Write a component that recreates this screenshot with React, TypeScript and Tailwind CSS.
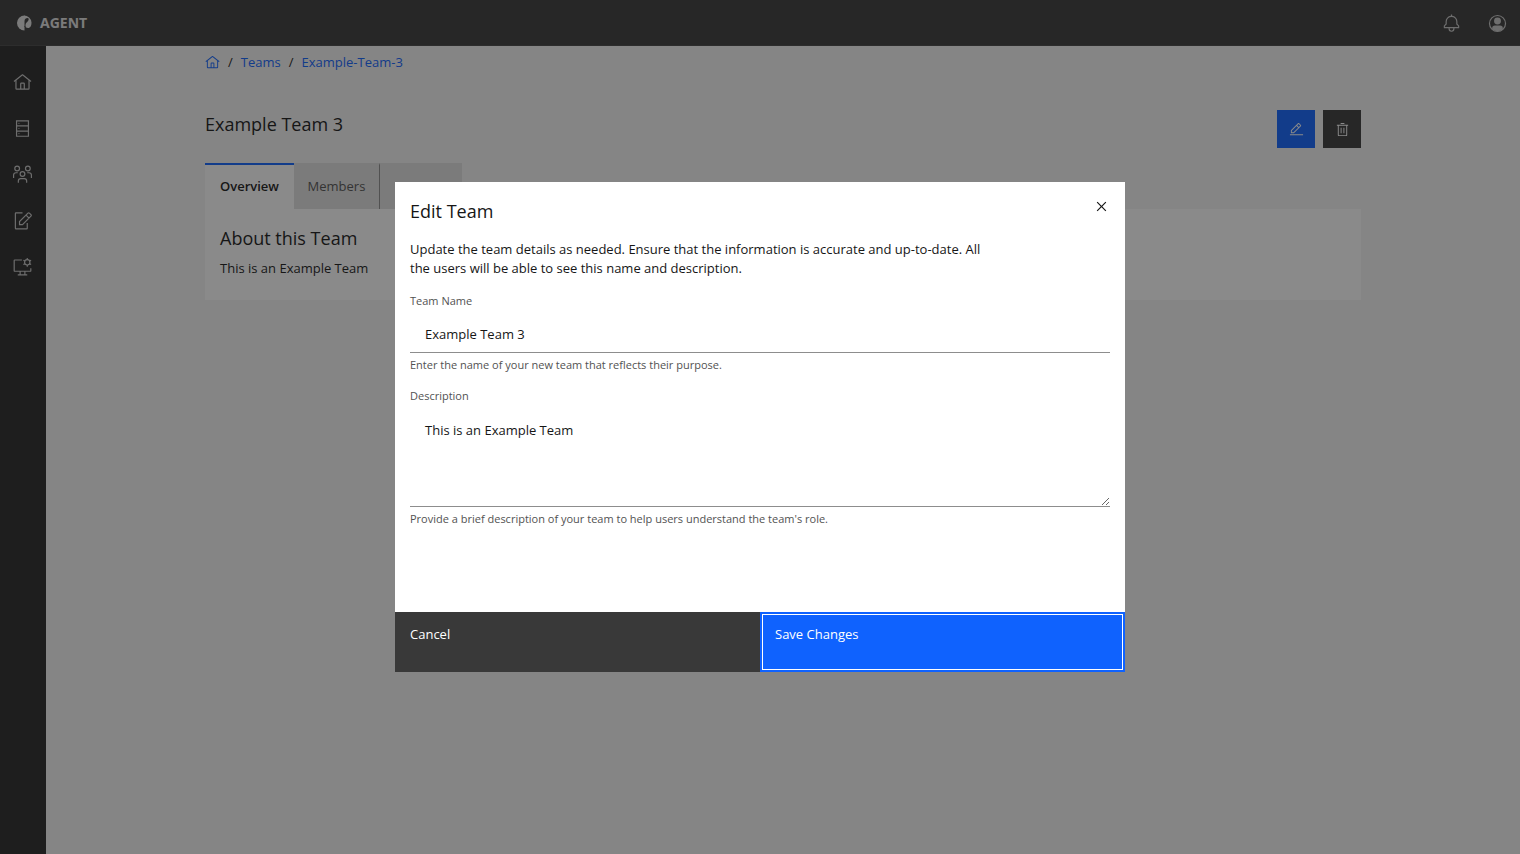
import React from "react";

type IconProps = { className?: string; children: React.ReactNode };

function Glyph({ className, children }: IconProps) {
  return (
    <svg viewBox="0 0 32 32" fill="currentColor" aria-hidden="true" className={className}>
      {children}
    </svg>
  );
}

function Outline({ className, children }: IconProps) {
  return (
    <svg viewBox="0 0 32 32" fill="none" stroke="currentColor" strokeWidth={2} aria-hidden="true" className={className}>
      {children}
    </svg>
  );
}

const HomeIcon = ({ className }: { className?: string }) => (
  <Glyph className={className}>
    <path d="M16.6123,2.2138a1.01,1.01,0,0,0-1.2427,0L1,13.4194l1.2427,1.5717L4,13.6208V26a2.0041,2.0041,0,0,0,2,2H26a2.0037,2.0037,0,0,0,2-2V13.63L29.7573,15,31,13.4282ZM18,26H14V18h4Zm2,0V18a2.0023,2.0023,0,0,0-2-2H14a2.002,2.002,0,0,0-2,2v8H6V12.0615l10-7.79,10,8.0122V26Z" />
  </Glyph>
);

const ServerIcon = () => (
  <Outline className="size-[19px]">
    <path d="M6 3H26V29H6ZM6 11.7H26M6 20.3H26" />
    <circle cx="10" cy="7.3" r="1" fill="currentColor" stroke="none" />
    <circle cx="10" cy="16" r="1" fill="currentColor" stroke="none" />
    <circle cx="10" cy="24.6" r="1" fill="currentColor" stroke="none" />
  </Outline>
);

const TeamIcon = () => (
  <Outline className="size-[19px]">
    <circle cx="7" cy="6" r="4" />
    <circle cx="25" cy="6" r="4" />
    <circle cx="16" cy="15" r="4" />
    <path d="M9 30V27a4 4 0 0 1 4-4h6a4 4 0 0 1 4 4v3M1 22V17a4 4 0 0 1 4-4H8M31 22V17a4 4 0 0 0-4-4H24" />
  </Outline>
);

const ComposeIcon = () => (
  <Outline className="size-[19px]">
    <path d="M16 3H5a1 1 0 0 0-1 1V29a1 1 0 0 0 1 1H23a1 1 0 0 0 1-1V20" />
    <path d="M11 23V17.8L25.2 3.6a1.7 1.7 0 0 1 2.4 0l2.6 2.6a1.7 1.7 0 0 1 0 2.4L16 23ZM22 7l5 5" />
  </Outline>
);

const ScreenSettingsIcon = () => (
  <Outline className="size-[19px]">
    <path d="M15 5H3a1 1 0 0 0-1 1V23a1 1 0 0 0 1 1H29a1 1 0 0 0 1-1V19M12 24V30M20 24V30M8 30H24" />
    <circle cx="24" cy="9" r="4.5" />
    <path d="M24 1.5V4.5M24 13.5V16.5M17.5 5.3L20.1 6.8M27.9 11.2L30.5 12.7M17.5 12.7L20.1 11.2M27.9 6.8L30.5 5.3" />
  </Outline>
);

const BellIcon = () => (
  <Glyph className="size-[19px]">
    <path d="M28.7071,19.293,26,16.5859V13a10.0136,10.0136,0,0,0-9-9.9492V1H15V3.0508A10.0136,10.0136,0,0,0,6,13v3.5859L3.2929,19.293A1,1,0,0,0,3,20v3a1,1,0,0,0,1,1h7v.7768a5.152,5.152,0,0,0,4.5,5.1987A5.0057,5.0057,0,0,0,21,25V24h7a1,1,0,0,0,1-1V20A1,1,0,0,0,28.7071,19.293ZM19,25a3,3,0,0,1-6,0V24h6Zm8-3H5V20.4141L7.707,17.707A1,1,0,0,0,8,17V13a8,8,0,0,1,16,0v4a1,1,0,0,0,.293.707L27,20.4141Z" />
  </Glyph>
);

const AvatarIcon = () => (
  <Outline className="size-[19px]">
    <circle cx="16" cy="16" r="13.5" />
    <circle cx="16" cy="11.8" r="5.8" fill="currentColor" stroke="none" />
    <path d="M7 25.5v-1.2a4.8 4.8 0 0 1 4.8-4.8h8.4a4.8 4.8 0 0 1 4.8 4.8v1.2a13.5 13.5 0 0 1-18 0Z" fill="currentColor" stroke="none" />
  </Outline>
);

const EditIcon = () => (
  <Glyph className="size-[15px]">
    <path d="M2 26H30V28H2zM25.4 9c.8-.8.8-2 0-2.8l-3.6-3.6c-.8-.8-2-.8-2.8 0l-15 15V24h6.4L25.4 9zM20.4 4L24 7.6l-3 3L17.4 7 20.4 4zM6 22v-3.6l10-10 3.6 3.6-10 10H6z" />
  </Glyph>
);

const TrashIcon = () => (
  <Glyph className="size-[15px]">
    <path d="M12 12H14V24H12zM18 12H20V24H18zM4 6V8H6V28a2 2 0 0 0 2 2H24a2 2 0 0 0 2-2V8h2V6zM8 28V8H24V28zM12 2H20V4H12z" />
  </Glyph>
);

const CloseIcon = () => (
  <Glyph className="size-[19px]">
    <path d="M24 9.4 22.6 8 16 14.6 9.4 8 8 9.4 14.6 16 8 22.6 9.4 24 16 17.4 22.6 24 24 22.6 17.4 16z" />
  </Glyph>
);

const Logo = () => (
  <svg viewBox="0 0 32 32" aria-hidden="true" className="size-4">
    <path d="M17 1A15 15 0 1 0 17 31Z" fill="currentColor" />
    <path d="M16 1a15 15 0 0 1 15 14c0 6-2 11-7 11c-3 0-5-2-6-4H16Z" fill="currentColor" />
    <path d="M17 24V12c0-4 3-6 6-6c3 0 3 4 1 6c-2 3-5 4-5 8v4Z" fill="#393939" />
  </svg>
);

const navItems = [
  { label: "Home", icon: <HomeIcon className="size-[19px]" /> },
  { label: "Catalog", icon: <ServerIcon /> },
  { label: "Teams", icon: <TeamIcon /> },
  { label: "Compose", icon: <ComposeIcon /> },
  { label: "Settings", icon: <ScreenSettingsIcon /> },
];

function Header() {
  return (
    <header className="flex h-[46px] items-center justify-between border-b border-[#444444] bg-[#393939] pl-4 pr-[13px] pt-px text-[#e0e0e0]">
      <a href="#" className="flex items-center gap-2 text-sm font-bold">
        <Logo />
        AGENT
      </a>
      <div className="flex items-center gap-[27px] text-[#c6c6c6]">
        <button type="button" aria-label="Notifications"><BellIcon /></button>
        <button type="button" aria-label="Account"><AvatarIcon /></button>
      </div>
    </header>
  );
}

function Sidebar() {
  return (
    <nav className="flex w-[46px] shrink-0 flex-col gap-[27px] bg-[#262626] pl-[13px] pt-[27px] text-[#c6c6c6]">
      {navItems.map((item) => (
        <a key={item.label} href="#" aria-label={item.label}>{item.icon}</a>
      ))}
    </nav>
  );
}

function TeamPage() {
  return (
    <main className="flex-1 bg-[#f4f4f4] px-4 text-[13px] text-[#161616]">
      <div className="mx-auto max-w-[1156px]">
        <div className="flex h-[33px] items-center gap-2">
          <a href="#" aria-label="Home" className="text-[#0f62fe]"><HomeIcon className="size-[15px]" /></a>
          <span>/</span>
          <a href="#" className="text-[#0f62fe]">Teams</a>
          <span>/</span>
          <a href="#" className="text-[#0f62fe]">Example-Team-3</a>
        </div>
        <div className="mt-[31px] flex items-start justify-between">
          <h1 className="text-lg leading-7">Example Team 3</h1>
          <div className="flex gap-2">
            <button type="button" aria-label="Edit team" className="grid size-[38px] place-items-center bg-[#0f62fe] text-white"><EditIcon /></button>
            <button type="button" aria-label="Delete team" className="grid size-[38px] place-items-center bg-[#393939] text-white"><TrashIcon /></button>
          </div>
        </div>
        <div role="tablist" className="mt-[15px] flex h-[46px]">
          <button type="button" role="tab" aria-selected="true" className="w-[89px] border-t-2 border-[#0f62fe] bg-white font-semibold">Overview</button>
          <button type="button" role="tab" aria-selected="false" className="w-[86px] border-r border-t-2 border-r-[#8d8d8d] border-t-[#e0e0e0] bg-[#e0e0e0] text-[#525252]">Members</button>
          <button type="button" role="tab" aria-selected="false" aria-label="More" className="w-[82px] bg-[#e0e0e0]" />
        </div>
        <section className="bg-white px-[15px] pb-[22px] pt-[15px]">
          <h2 className="text-lg leading-7">About this Team</h2>
          <p className="mt-[7px] leading-[19px]">This is an Example Team</p>
        </section>
      </div>
    </main>
  );
}

function EditTeamDialog() {
  return (
    <div className="fixed inset-0 grid place-items-center bg-[#161616]/50">
      <form
        role="dialog"
        aria-modal="true"
        aria-labelledby="dialog-title"
        className="flex w-full max-w-[730px] flex-col bg-white text-[13px] text-[#161616]"
        onSubmit={(e) => e.preventDefault()}
      >
        <div className="flex items-start justify-between pl-[15px] pr-[14px] pt-[15px]">
          <h2 id="dialog-title" className="text-lg leading-7">Edit Team</h2>
          <button type="button" aria-label="Close"><CloseIcon /></button>
        </div>
        <div className="flex flex-col px-[15px] pb-[85px] pt-[15px]">
          <p className="max-w-[600px] leading-[19px]">
            Update the team details as needed. Ensure that the information is accurate and up-to-date. All
            <br />
            the users will be able to see this name and description.
          </p>
          <label htmlFor="team-name" className="mt-[15px] text-[11px] leading-4 text-[#525252]">Team Name</label>
          <input id="team-name" defaultValue="Example Team 3" className="mt-[7px] h-[37px] border-b border-[#8d8d8d] px-[15px] outline-none" />
          <p className="mt-1 text-[11px] leading-4 text-[#525252]">Enter the name of your new team that reflects their purpose.</p>
          <label htmlFor="team-description" className="mt-[15px] text-[11px] leading-4 text-[#525252]">Description</label>
          <textarea id="team-description" defaultValue="This is an Example Team" className="mt-[7px] h-24 resize-y border-b border-[#8d8d8d] px-[15px] py-[10px] leading-[19px] outline-none" />
          <p className="mt-1 text-[11px] leading-4 text-[#525252]">Provide a brief description of your team to help users understand the team's role.</p>
        </div>
        <div className="grid h-[60px] grid-cols-2 font-medium text-white">
          <button type="button" className="flex items-start bg-[#393939] px-[15px] pt-[13px]">Cancel</button>
          <button type="submit" className="flex items-start border-2 border-[#0f62fe] bg-[#0f62fe] px-[13px] pt-[11px] ring-1 ring-inset ring-white">Save Changes</button>
        </div>
      </form>
    </div>
  );
}

export default function App() {
  return (
    <div className="flex min-h-screen flex-col font-['Open_Sans','Noto_Sans',sans-serif]">
      <Header />
      <div className="flex flex-1">
        <Sidebar />
        <TeamPage />
      </div>
      <EditTeamDialog />
    </div>
  );
}
